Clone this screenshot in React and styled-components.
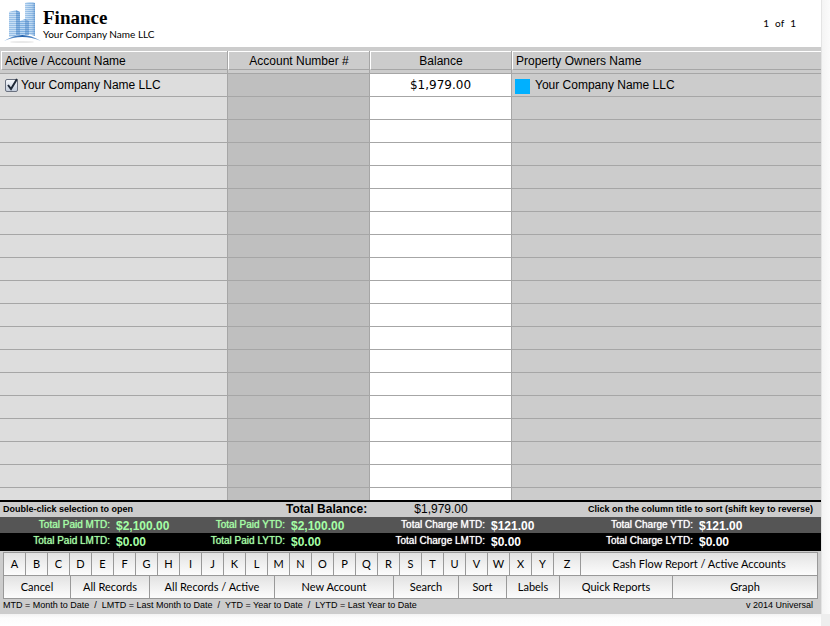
import React, { useState } from 'react';
import styled, { createGlobalStyle } from 'styled-components';

const sans = '"Liberation Sans", Arial, sans-serif';
const humanist = 'Lato, "Open Sans", sans-serif';

const GlobalStyle = createGlobalStyle`
  * {
    box-sizing: border-box;
  }

  body {
    margin: 0;
    background-color: #ffffff;
    color: #000000;
    font-family: ${sans};
    font-size: 12px;
  }

  button,
  input {
    font: inherit;
    color: inherit;
  }
`;

const Shell = styled.div`
  display: grid;
  grid-template-columns: minmax(0, 1fr) 9px;
`;

const SideEdge = styled.div`
  border-left: 1px solid #e4e4e4;
  background: linear-gradient(to right, #f4f4f4, #fbfbfb);
`;

const BottomEdge = styled.div`
  height: 12px;
  background: linear-gradient(#f2f2f2, #fcfcfc 4px, #ffffff);
`;

const Corner = styled.div`
  background-color: #eeeeee;
`;

const Window = styled.main`
  background-color: #cccccc;
`;

const Header = styled.header`
  display: flex;
  align-items: flex-start;
  height: 47px;
  padding: 0 25px 0 3px;
  background-color: #ffffff;
`;

const Titles = styled.div`
  flex: 1;
  padding: 9px 0 0 2px;
`;

const Title = styled.h1`
  margin: 0;
  font-family: "Liberation Serif", "Times New Roman", serif;
  font-size: 19px;
  line-height: 18px;
`;

const Subtitle = styled.p`
  margin: 0;
  font-family: ${humanist};
  font-size: 10px;
  line-height: 14px;
`;

const Pager = styled.div`
  display: flex;
  gap: 6px;
  padding-top: 16px;
  font-family: ${humanist};
  font-size: 10px;
  line-height: 14px;
`;

const Table = styled.table`
  width: 100%;
  table-layout: fixed;
  border-collapse: separate;
  border-spacing: 0;
  border-top: 4px solid #cccccc;
`;

const HeadCell = styled.th`
  width: ${(props) => props.$width || 'auto'};
  height: 23px;
  padding: 0 0 3px ${(props) => (props.$first ? '1px' : '0')};
  border-bottom: 1px solid #a6a6a6;
  border-right: ${(props) => (props.$last ? '0' : '1px solid #a6a6a6')};
  font-weight: normal;
`;

const SortButton = styled.button`
  display: block;
  width: 100%;
  height: 19px;
  padding: 0 3px;
  border: 0 solid #a6a6a6;
  border-width: 1px 0 1px 1px;
  border-top-color: #ffffff;
  border-left-color: #ffffff;
  background-color: #cccccc;
  text-align: ${(props) => props.$align || 'left'};
  line-height: 18px;
`;

const Cell = styled.td`
  height: ${(props) => (props.$short ? '12px' : '23px')};
  padding: 0 4px;
  border-bottom: ${(props) => (props.$short ? '0' : '1px solid #a6a6a6')};
  border-right: ${(props) => (props.$last ? '0' : '1px solid #a6a6a6')};
  background-color: ${(props) => props.$color};
  text-align: ${(props) => props.$align || 'left'};
  line-height: 22px;
`;

const Amount = styled.span`
  font-family: "DejaVu Sans", sans-serif;
`;

const AccountLabel = styled.label`
  display: flex;
  align-items: center;
  gap: 3px;
`;

const CheckWrap = styled.span`
  position: relative;
  width: 13px;
  height: 13px;
  margin: 1px 0 0 1px;
`;

const CheckInput = styled.input`
  display: block;
  appearance: none;
  width: 13px;
  height: 13px;
  margin: 0;
  border: 1px solid #6b7280;
  border-radius: 2px;
  background: linear-gradient(#f5f7fa, #c4cedd);

  &:not(:checked) + svg {
    display: none;
  }
`;

const CheckMark = styled.svg`
  position: absolute;
  top: -1px;
  left: 0;
  pointer-events: none;
`;

const Owner = styled.div`
  display: flex;
  align-items: center;
  gap: 5px;
`;

const Swatch = styled.span`
  width: 15px;
  height: 15px;
  margin: 2px 0 0 -1px;
  background-color: #00b0ff;
`;

const BalanceBar = styled.div`
  display: grid;
  grid-template-columns: 286px 84px 142px 1fr;
  height: 17px;
  border-top: 2px solid #000000;
  line-height: 15px;
`;

const Note = styled.span`
  padding: 0 8px 0 3px;
  font-size: 9px;
  font-weight: bold;
  text-align: ${(props) => props.$align || 'left'};
  white-space: nowrap;
`;

const BalanceValue = styled.span`
  text-align: center;
`;

const Totals = styled.dl`
  display: grid;
  grid-template-columns: 110fr 65fr 110fr 90fr 110fr 98fr 110fr 128fr;
  height: ${(props) => props.$height};
  margin: 0;
  background-color: ${(props) => props.$color};
  line-height: 16px;
`;

const TotalLabel = styled.dt`
  color: ${(props) => (props.$paid ? '#a5ffa5' : '#ffffff')};
  font-size: 10px;
  text-align: right;
  text-shadow: 0 0 1px currentColor;
  white-space: nowrap;
`;

const TotalValue = styled.dd`
  margin: 0;
  padding-left: 6px;
  color: ${(props) => (props.$paid ? '#a5ffa5' : '#ffffff')};
  font-weight: bold;
  line-height: 18px;
`;

const Toolbar = styled.nav`
  margin: 1px 3px 0;
  border: 1px solid #999999;
`;

const ButtonRow = styled.div`
  display: grid;
  grid-template-columns: ${(props) => props.$columns};

  & + & {
    border-top: 1px solid #999999;
  }
`;

const ToolButton = styled.button`
  height: 22px;
  padding: 0;
  border: 0;
  border-right: 1px solid #999999;
  background: linear-gradient(#e2e2e2, #f0f0f0 50%, #fcfcfc);
  font-family: ${humanist};
  font-size: 11px;
  line-height: 22px;
  white-space: nowrap;

  &:last-child {
    border-right: 0;
  }
`;

const Legend = styled.footer`
  display: flex;
  justify-content: space-between;
  height: 15px;
  padding: 0 8px 0 3px;
  font-size: 9px;
  line-height: 13px;
  white-space: pre;
`;

const columns = [
  { title: 'Active / Account Name', width: '228px', color: '#dddddd' },
  { title: 'Account Number #', width: '142px', color: '#bfbfbf', align: 'center' },
  { title: 'Balance', width: '142px', color: '#ffffff', align: 'center' },
  { title: 'Property Owners Name', color: '#cccccc' },
];

const monthTotals = [
  { label: 'Total Paid MTD:', value: '$2,100.00', paid: true },
  { label: 'Total Paid YTD:', value: '$2,100.00', paid: true },
  { label: 'Total Charge MTD:', value: '$121.00' },
  { label: 'Total Charge YTD:', value: '$121.00' },
];

const lastTotals = [
  { label: 'Total Paid LMTD:', value: '$0.00', paid: true },
  { label: 'Total Paid LYTD:', value: '$0.00', paid: true },
  { label: 'Total Charge LMTD:', value: '$0.00' },
  { label: 'Total Charge LYTD:', value: '$0.00' },
];

const letters = 'ABCDEFGHIJKLMNOPQRSTUVWXYZ'.split('');

const actions = [
  'Cancel',
  'All Records',
  'All Records / Active',
  'New Account',
  'Search',
  'Sort',
  'Labels',
  'Quick Reports',
  'Graph',
];

const emptyRows = Array.from({ length: 18 }, (_, i) => i);

const Logo = () => (
  <svg width="38" height="44" viewBox="0 0 38 44" aria-hidden="true">
    <defs>
      <pattern id="floors" width="4" height="2" patternUnits="userSpaceOnUse">
        <rect width="4" height="2" fill="#7fb0e0" />
        <rect width="4" height="1" fill="#b9d6f2" />
      </pattern>
      <linearGradient id="shade" x1="0" x2="1" y1="0" y2="0">
        <stop offset="0" stopColor="#ffffff" stopOpacity="0.3" />
        <stop offset="0.5" stopColor="#ffffff" stopOpacity="0.1" />
        <stop offset="1" stopColor="#3f7dc0" stopOpacity="0.5" />
      </linearGradient>
      <linearGradient id="arc" x1="0" x2="1" y1="0" y2="0">
        <stop offset="0" stopColor="#7fa9d8" />
        <stop offset="0.5" stopColor="#2766b0" />
        <stop offset="1" stopColor="#7fa9d8" />
      </linearGradient>
    </defs>
    <path d="M22 3 Q27 1 32 3 V36 Q27 34 22 34Z" fill="url(#floors)" />
    <path d="M22 3 Q27 1 32 3 V36 Q27 34 22 34Z" fill="url(#shade)" />
    <path d="M6 12 L13 10 L17 12 V35 L6 37Z" fill="url(#floors)" />
    <path d="M6 12 L13 10 V35 L6 37Z" fill="#ffffff" opacity="0.2" />
    <path d="M13 10 L17 12 V35 H13Z" fill="#3f7dc0" opacity="0.4" />
    <path d="M17 21 L22 19 L26 21 V35 H17Z" fill="url(#floors)" />
    <path d="M22 19 L26 21 V35 H22Z" fill="#3f7dc0" opacity="0.4" />
    <path d="M1 41 Q19 29 38 41Z" fill="#ffffff" />
    <ellipse cx="19" cy="42" rx="12" ry="1" fill="#e9e9e9" />
    <path d="M1 41 Q19 29 38 41 Q19 33 1 41Z" fill="url(#arc)" />
  </svg>
);

const TotalsRow = ({ items, color, height }) => (
  <Totals $color={color} $height={height}>
    {items.map((item) => (
      <React.Fragment key={item.label}>
        <TotalLabel $paid={item.paid}>{item.label}</TotalLabel>
        <TotalValue $paid={item.paid}>{item.value}</TotalValue>
      </React.Fragment>
    ))}
  </Totals>
);

const AccountRow = ({ cells, short }) => (
  <tr>
    {columns.map((column, i) => (
      <Cell
        key={column.title}
        $color={column.color}
        $align={column.align}
        $last={i === columns.length - 1}
        $short={short}
      >
        {cells && cells[i]}
      </Cell>
    ))}
  </tr>
);

const App = () => {
  const [active, setActive] = useState(true);

  const account = [
    <AccountLabel key="name">
      <CheckWrap>
        <CheckInput type="checkbox" checked={active} onChange={() => setActive(!active)} />
        <CheckMark width="14" height="14" viewBox="0 0 14 14">
          <path d="M3 7 L6 11 L12 1" fill="none" stroke="#1f2937" strokeWidth="2" />
        </CheckMark>
      </CheckWrap>
      Your Company Name LLC
    </AccountLabel>,
    null,
    <Amount key="balance">$1,979.00</Amount>,
    <Owner key="owner">
      <Swatch />
      Your Company Name LLC
    </Owner>,
  ];

  return (
    <>
      <GlobalStyle />
      <Shell>
        <Window>
          <Header>
            <Logo />
            <Titles>
              <Title>Finance</Title>
              <Subtitle>Your Company Name LLC</Subtitle>
            </Titles>
            <Pager>
              <span>1</span>
              <span>of</span>
              <span>1</span>
            </Pager>
          </Header>

          <Table>
            <thead>
              <tr>
                {columns.map((column, i) => (
                  <HeadCell
                    key={column.title}
                    $width={column.width}
                    $first={i === 0}
                    $last={i === columns.length - 1}
                  >
                    <SortButton type="button" $align={column.align}>
                      {column.title}
                    </SortButton>
                  </HeadCell>
                ))}
              </tr>
            </thead>
            <tbody>
              <AccountRow cells={account} />
              {emptyRows.map((row) => (
                <AccountRow key={row} short={row === emptyRows.length - 1} />
              ))}
            </tbody>
          </Table>

          <BalanceBar>
            <Note>Double-click selection to open</Note>
            <strong>Total Balance:</strong>
            <BalanceValue>$1,979.00</BalanceValue>
            <Note $align="right">Click on the column title to sort (shift key to reverse)</Note>
          </BalanceBar>
          <TotalsRow items={monthTotals} color="#555555" height="16px" />
          <TotalsRow items={lastTotals} color="#000000" height="18px" />

          <Toolbar>
            <ButtonRow $columns="repeat(25, 22px) 27px 1fr">
              {letters.map((letter) => (
                <ToolButton key={letter} type="button">{letter}</ToolButton>
              ))}
              <ToolButton type="button">Cash Flow Report / Active Accounts</ToolButton>
            </ButtonRow>
            <ButtonRow $columns="67fr 79fr 125fr 119fr 65fr 48fr 53fr 113fr 144fr">
              {actions.map((action) => (
                <ToolButton key={action} type="button">{action}</ToolButton>
              ))}
            </ButtonRow>
          </Toolbar>

          <Legend>
            <span>{'MTD = Month to Date  /  LMTD = Last Month to Date  /  YTD = Year to Date  /  LYTD = Last Year to Date'}</span>
            <span>v 2014 Universal</span>
          </Legend>
        </Window>
        <SideEdge />
        <BottomEdge />
        <Corner />
      </Shell>
    </>
  );
};

export default App;
